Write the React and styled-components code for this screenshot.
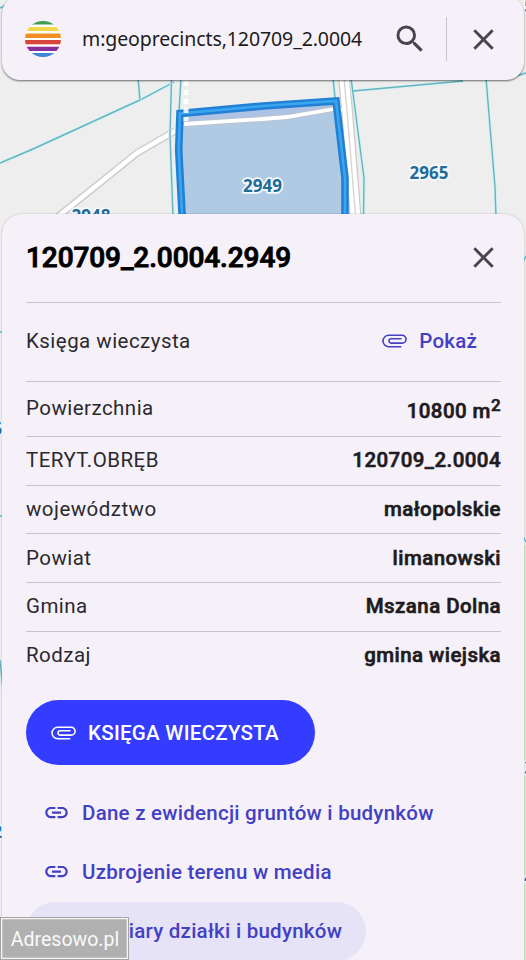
import * as React from 'react';
import styled, { createGlobalStyle } from 'styled-components';
import { MdClose, MdLink, MdSearch } from 'react-icons/md';

const GlobalStyle = createGlobalStyle`
  * {
    box-sizing: border-box;
  }

  body {
    margin: 0;
    overflow: hidden;
    font-family: Roboto, sans-serif;
  }
`;

const Page = styled.div`
  position: relative;
  display: flex;
  flex-direction: column;
  width: 526px;
  height: 960px;
  overflow: hidden;
  background: #eeeeee;
`;

const MapCanvas = styled.svg`
  position: absolute;
  inset: 0;
`;

const SearchBar = styled.header`
  position: relative;
  display: flex;
  align-items: center;
  flex: none;
  height: 84px;
  margin: -4px 2px 0 2px;
  padding: 2px 23px 0 23px;
  border-radius: 18px;
  background: #f6f1f8;
  box-shadow: 0 1px 2px rgba(0, 0, 0, 0.55);
`;

const Logo = styled.svg`
  flex: none;
  margin-right: 21px;
`;

const Query = styled.div`
  flex: 1;
  padding-bottom: 1px;
  font-family: 'Noto Sans', sans-serif;
  font-size: 19.5px;
  letter-spacing: -0.1px;
  white-space: nowrap;
  color: #1d1b20;
`;

const IconButton = styled.button`
  display: flex;
  padding: 0;
  border: 0;
  background: none;
  color: #49454f;
`;

const Separator = styled.div`
  width: 1px;
  height: 44px;
  margin: 0 19px 0 18px;
  background: #c9c5cc;
`;

const Sheet = styled.main`
  position: relative;
  flex: 1;
  margin: 134px 2px 0 2px;
  padding: 0 23px 0 24px;
  border-radius: 20px 20px 0 0;
  background: #f6f1f8;
  box-shadow: 0 0 2px rgba(0, 0, 0, 0.25);
`;

const SheetHeader = styled.div`
  display: flex;
  align-items: center;
  justify-content: space-between;
  height: 88px;
  padding: 0 0 2px 0;
`;

const Title = styled.h1`
  margin: 0;
  font-size: 28px;
  font-weight: 500;
  letter-spacing: -0.1px;
  color: #000;
  -webkit-text-stroke: 0.9px #000;
`;

const Row = styled.div`
  display: flex;
  align-items: center;
  justify-content: space-between;
  height: ${({ $height }) => $height || 48.7}px;
  padding-bottom: 1px;
  border-top: 1px solid #c8c3cb;
  color: #2b292e;
`;

const Label = styled.span`
  font-size: 20.5px;
  letter-spacing: 0.46px;
`;

const Value = styled.span`
  padding-top: ${({ $raised }) => ($raised ? 5 : 0)}px;
  font-size: 20.5px;
  font-weight: 500;
  letter-spacing: 0.43px;
  color: #1d1b20;
  -webkit-text-stroke: 0.6px #1d1b20;

  sup {
    font-size: 17px;
    line-height: 0;
    vertical-align: 7px;
  }
`;

const TextButton = styled.button`
  display: flex;
  align-items: center;
  gap: 12px;
  padding: 0 24px 0 0;
  border: 0;
  background: none;
  font-family: inherit;
  font-size: 20.5px;
  font-weight: 500;
  letter-spacing: 0.2px;
  color: #4340c4;
`;

const PrimaryButton = styled.button`
  display: flex;
  align-items: center;
  gap: 12px;
  width: 289px;
  height: 65px;
  margin-top: 21px;
  padding: 0 0 0 25px;
  border: 0;
  border-radius: 33px;
  background: #343dff;
  font-family: inherit;
  font-size: 20.5px;
  font-weight: 500;
  letter-spacing: 0.28px;
  color: #fff;
`;

const Links = styled.nav`
  display: flex;
  flex-direction: column;
  align-items: flex-start;
  margin-top: 17.5px;
`;

const LinkItem = styled.a`
  display: flex;
  align-items: center;
  gap: 12px;
  height: 59.3px;
  padding: 0 24px 0 17px;
  border-radius: 30px;
  background: ${({ $active }) => ($active ? '#e6e3f7' : 'transparent')};
  font-size: 20.5px;
  font-weight: 500;
  letter-spacing: 0.25px;
  white-space: nowrap;
  color: #4340c4;
`;

const Watermark = styled.div`
  position: absolute;
  left: 0;
  bottom: 0;
  display: flex;
  align-items: center;
  justify-content: center;
  width: 129px;
  height: 43px;
  padding: 2px 0 0 1px;
  border: 1px solid #a5a5a5;
  background: #b0b0b0;
  box-shadow: inset 0 0 0 1.3px #f4f4f4;
  font-size: 19.5px;
  letter-spacing: 0;
  color: #fafafa;
`;

const details = [
  { label: 'Powierzchnia', value: '10800 m', sup: '2', height: 55.3 },
  { label: 'TERYT.OBRĘB', value: '120709_2.0004' },
  { label: 'województwo', value: 'małopolskie' },
  { label: 'Powiat', value: 'limanowski' },
  { label: 'Gmina', value: 'Mszana Dolna' },
  { label: 'Rodzaj', value: 'gmina wiejska' },
];

const links = [
  { text: 'Dane z ewidencji gruntów i budynków' },
  { text: 'Uzbrojenie terenu w media' },
  { text: 'Wymiary działki i budynków', active: true },
];

const stripes = [
  { y: 0, height: 3.5, color: '#3f9c50' },
  { y: 6, height: 4, color: '#f3d84a' },
  { y: 12.5, height: 4.5, color: '#f08f24' },
  { y: 19, height: 4.3, color: '#d8453a' },
  { y: 25.7, height: 4.3, color: '#8a2f9e' },
  { y: 32, height: 4, color: '#3d86d8' },
];

const parcels = [
  'M0 163 L33 149 L140 100 L174 82',
  'M138 78 L140 100',
  'M171.5 80 L170 135 L173 216',
  'M181 78 L179 112',
  'M333 78 L335 98',
  'M351 78 L364 178 L363.5 216',
  'M353 91 L463 81',
  'M486 78 L495 187 L496 216',
  'M518 75.5 L526 73',
  'M0 8 L6 5',
  'M0 332 H4',
  'M0 516 H4',
  'M0 660 L3 690',
  'M523 262 L526 256',
  'M523 536 L526 542',
];

const ROAD = 'M56 218 L101 182 L137 153 L175 131';
const LANE = 'M344 78 L347 110 L355.5 216';
const INNER = 'M184 124 L263 119 L287 117 L334 109';
const OUTLINE = 'M182.5 222 L178.7 150 L180 113.5 L263 106 L336 101 L345 178 V222';

const mapLabels = [
  { x: 262.5, y: 191.5, text: '2949' },
  { x: 429, y: 179, text: '2965' },
  { x: 91, y: 222, text: '2948' },
  { x: -3, y: 435, text: '6' },
  { x: -3, y: 838, text: '2' },
  { x: 529, y: 12, text: '5' },
  { x: 529, y: 774, text: '3' },
  { x: 529, y: 884, text: '4' },
];

const CadastralMap = () => (
  <MapCanvas width="526" height="960" viewBox="0 0 526 960" fill="none">
    <path d="M520 545 H526 V960 H520 Z" fill="#d5e8d0" />
    <path d={ROAD} stroke="#cfcdcb" strokeWidth="7.5" />
    <path d={ROAD} stroke="#fff" strokeWidth="4.6" />
    <path d={LANE} stroke="#cdc9c6" strokeWidth="12" />
    <path d={LANE} stroke="#fff" strokeWidth="9.5" />
    <path d={LANE} stroke="#d6d2cf" strokeWidth="1.3" />
    <path d="M342 110 L334 112" stroke="#fff" strokeWidth="4" />
    {parcels.map((d) => (
      <React.Fragment key={d}>
        <path d={d} stroke="#d3f1f5" strokeWidth="3.2" />
        <path d={d} stroke="#66b4bf" strokeWidth="1.4" />
      </React.Fragment>
    ))}
    <path d={OUTLINE} fill="#b0cae4" />
    <path d="M184 113 L334 104 L334 109 L287 116 L184 123 Z" fill="#aec3e4" />
    <path d={INNER} stroke="#bdc2ca" strokeWidth="5.5" />
    <path d={INNER} stroke="#fff" strokeWidth="3.8" />
    <path d={OUTLINE} stroke="#2180d3" strokeWidth="7.6" />
    <path d={OUTLINE} stroke="#3aa5f0" strokeWidth="2.6" />
    <path
      d="M186 81 V121"
      stroke="#fff"
      strokeWidth="5"
      strokeDasharray="5 4"
      strokeOpacity="0.85"
    />
    {mapLabels.map(({ x, y, text }) => (
      <text
        key={`${text}-${y}`}
        x={x}
        y={y}
        textAnchor="middle"
        fontFamily="'Noto Sans', sans-serif"
        fontSize="17"
        fontWeight="700"
        fill="#226b96"
        stroke="#f5fafd"
        strokeWidth="3.5"
        strokeLinejoin="round"
        paintOrder="stroke"
      >
        {text}
      </text>
    ))}
  </MapCanvas>
);

const ClipIcon = () => (
  <svg
    width="25"
    height="14"
    viewBox="0 0 25 14"
    fill="none"
    stroke="currentColor"
    strokeWidth="1.6"
  >
    <path d="M19.3 12.7 H6.7 A5.7 5.7 0 0 1 6.7 1.3 H20.2 A3.9 3.9 0 0 1 20.2 9.1 H9.2 A2.2 2.2 0 0 1 9.2 4.7 H19.5" />
  </svg>
);

const App = () => (
  <Page>
    <GlobalStyle />
    <CadastralMap />
    <SearchBar>
      <Logo width="36" height="36" viewBox="0 0 36 36">
        <clipPath id="disc">
          <circle cx="18" cy="18" r="18" />
        </clipPath>
        <g clipPath="url(#disc)">
          <rect width="36" height="36" fill="#fffdf8" />
          {stripes.map(({ y, height, color }) => (
            <rect key={y} y={y} width="36" height={height} fill={color} />
          ))}
        </g>
      </Logo>
      <Query>m:geoprecincts,120709_2.0004</Query>
      <IconButton aria-label="Szukaj">
        <MdSearch size={36} />
      </IconButton>
      <Separator />
      <IconButton aria-label="Wyczyść">
        <MdClose size={35} />
      </IconButton>
    </SearchBar>
    <Sheet>
      <SheetHeader>
        <Title>120709_2.0004.2949</Title>
        <IconButton aria-label="Zamknij">
          <MdClose size={35} />
        </IconButton>
      </SheetHeader>
      <Row $height={78.7}>
        <Label>Księga wieczysta</Label>
        <TextButton>
          <ClipIcon />
          Pokaż
        </TextButton>
      </Row>
      {details.map(({ label, value, sup, height }) => (
        <Row key={label} $height={height}>
          <Label>{label}</Label>
          <Value $raised={Boolean(sup)}>
            {value}
            {sup && <sup>{sup}</sup>}
          </Value>
        </Row>
      ))}
      <PrimaryButton>
        <ClipIcon />
        KSIĘGA WIECZYSTA
      </PrimaryButton>
      <Links>
        {links.map(({ text, active }) => (
          <LinkItem key={text} $active={active}>
            <MdLink size={27} />
            {text}
          </LinkItem>
        ))}
      </Links>
    </Sheet>
    <Watermark>Adresowo.pl</Watermark>
  </Page>
);

export default App;
